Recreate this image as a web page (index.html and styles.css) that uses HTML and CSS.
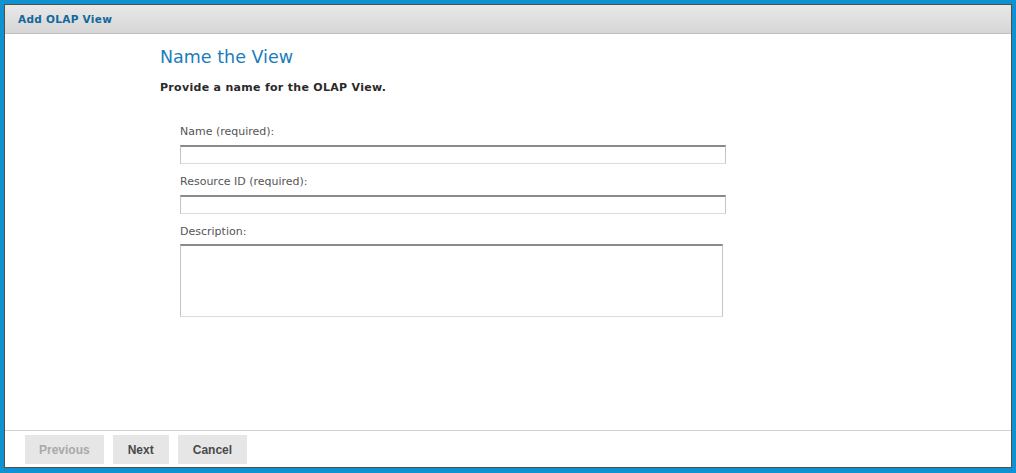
FILE: index.html
```html
<!DOCTYPE html>
<html>
<head>
<meta charset="utf-8">
<title>Add OLAP View</title>
<link rel="stylesheet" href="styles.css">
</head>
<body>
<div class="dialog">
  <div class="dialog-header">Add OLAP View</div>
  <div class="dialog-body">
    <h2 class="step-title">Name the View</h2>
    <p class="step-intro">Provide a name for the OLAP View.</p>
    <div class="fields">
      <label class="field">
        <span class="field-label">Name (required):</span>
        <input class="text-input" type="text">
      </label>
      <label class="field">
        <span class="field-label">Resource ID (required):</span>
        <input class="text-input" type="text">
      </label>
      <label class="field">
        <span class="field-label">Description:</span>
        <textarea class="text-area"></textarea>
      </label>
    </div>
  </div>
  <div class="dialog-footer">
    <button class="btn btn-prev" disabled>Previous</button>
    <button class="btn">Next</button>
    <button class="btn">Cancel</button>
  </div>
</div>
</body>
</html>
```

FILE: styles.css
```css
html, body {
  margin: 0;
  padding: 0;
  height: 100%;
}

body {
  background: #1192d0;
  padding: 4px 4px 5px 4px;
  box-sizing: border-box;
  font-family: "DejaVu Sans", Verdana, sans-serif;
}

.dialog {
  height: 100%;
  box-sizing: border-box;
  border: 1px solid #4e4e4e;
  background: #ffffff;
  display: flex;
  flex-direction: column;
}

.dialog-header {
  height: 28px;
  border-bottom: 1px solid #c0c0c0;
  background: linear-gradient(#e8e8e8, #d6d6d6);
  color: #12679d;
  font-weight: bold;
  font-size: 10.5px;
  letter-spacing: 0.3px;
  line-height: 28px;
  padding-left: 13px;
}

.dialog-body {
  flex: 1;
  padding: 12px 0 0 155px;
}

.step-title {
  margin: 0;
  font-weight: normal;
  font-size: 17.5px;
  line-height: 22px;
  color: #1b7dbb;
}

.step-intro {
  margin: 13px 0 0 0;
  font-size: 11px;
  font-weight: bold;
  letter-spacing: 0.3px;
  line-height: 14px;
  color: #2a2a2a;
}

.fields {
  margin: 30px 0 0 20px;
  display: flex;
  flex-direction: column;
  gap: 11px;
}

.field {
  display: flex;
  flex-direction: column;
  gap: 6px;
}

.field-label {
  font-size: 11px;
  line-height: 14px;
  color: #555555;
}

.text-input,
.text-area {
  box-sizing: border-box;
  margin: 0;
  background: #ffffff;
  border-style: solid;
  border-width: 2px 1px 1px 1px;
  border-color: #8a8a8a #c4c4c4 #dcdcdc #c4c4c4;
  outline: none;
}

.text-input {
  width: 546px;
  height: 19px;
}

.text-area {
  width: 543px;
  height: 73px;
  margin-top: -1px;
  resize: none;
}

.dialog-footer {
  border-top: 1px solid #d2d2d2;
  padding: 4px 0 3px 20px;
  display: flex;
  gap: 9px;
}

.btn {
  height: 29px;
  padding: 0 15px;
  border: none;
  background: #e6e6e6;
  font-family: "Liberation Sans", Arial, sans-serif;
  font-weight: bold;
  font-size: 12px;
  color: #4a4a4a;
}

.btn-prev {
  padding: 0 14px;
}

.btn:disabled {
  color: #a9a9a9;
}
```
